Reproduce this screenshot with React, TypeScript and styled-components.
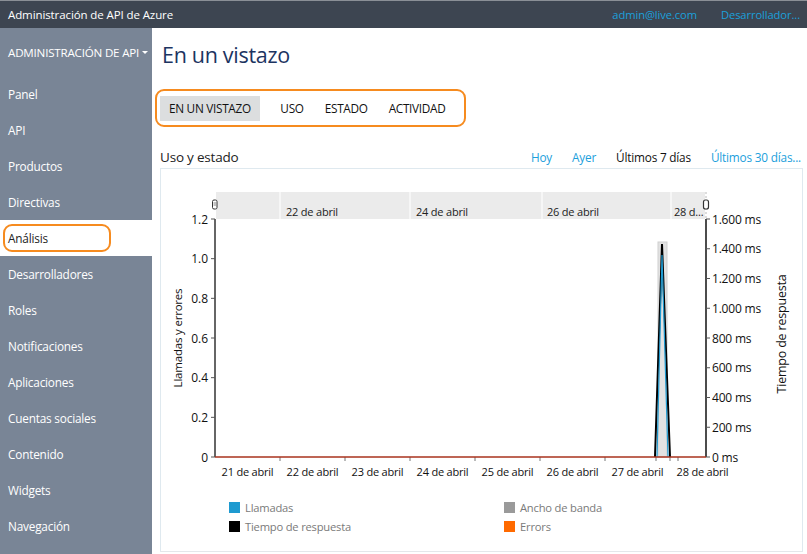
import React from "react";
import styled, { createGlobalStyle } from "styled-components";

const Global = createGlobalStyle`
  html, body { margin: 0; padding: 0; background: #fff; }
  body { font-family: "Open Sans", "Noto Sans", sans-serif; }
  * { box-sizing: border-box; }
`;

const Page = styled.div`
  width: 807px;
  height: 554px;
  display: flex;
  flex-direction: column;
  overflow: hidden;
`;

const TopBar = styled.header`
  height: 28px;
  flex: none;
  background: #3d4551;
  border-top: 1px solid #8a8f96;
  display: flex;
  align-items: center;
  padding: 0 7px 0 8px;
  font-size: 11.5px;
  color: #fff;
  letter-spacing: -0.1px;
`;

const Brand = styled.div`
  flex: 1;
`;

const TopLink = styled.a`
  color: #1ba0dc;
  text-decoration: none;
  margin-left: 24px;
  font-size: 11.2px;
`;

const Body = styled.div`
  flex: 1;
  display: flex;
  min-height: 0;
`;

const Sidebar = styled.nav`
  width: 152px;
  flex: none;
  background: #798596;
  display: flex;
  flex-direction: column;
`;

const SideHeader = styled.div`
  height: 48px;
  display: flex;
  align-items: center;
  padding-left: 8px;
  color: #fff;
  font-size: 11.6px;
  white-space: nowrap;
  letter-spacing: -0.2px;
`;

const Caret = styled.span`
  display: inline-block;
  width: 0;
  height: 0;
  border-left: 3px solid transparent;
  border-right: 3px solid transparent;
  border-top: 3px solid #fff;
  margin-left: 3px;
`;

const SideItem = styled.div<{ $active?: boolean }>`
  height: 36px;
  display: flex;
  align-items: center;
  padding-left: 8px;
  font-size: 11.8px;
  color: ${(p) => (p.$active ? "#222" : "#fff")};
  background: ${(p) => (p.$active ? "#fff" : "transparent")};
  position: relative;
  letter-spacing: -0.2px;
`;

const Highlight = styled.span`
  position: absolute;
  left: 3px;
  top: 4px;
  width: 108px;
  height: 28px;
  border: 2.5px solid #f68b1f;
  border-radius: 9px;
`;

const Main = styled.main`
  flex: 1;
  padding: 0 4px 0 8px;
  display: flex;
  flex-direction: column;
`;

const Title = styled.h1`
  margin: 12px 0 0 2px;
  font-size: 21.5px;
  font-weight: 400;
  color: #1c3461;
  line-height: 30px;
  letter-spacing: -0.3px;
`;

const TabBox = styled.div`
  margin-top: 19px;
  margin-left: -5px;
  width: 311px;
  height: 38px;
  border: 2.5px solid #f68b1f;
  border-radius: 9px;
  display: flex;
  align-items: center;
  padding-left: 3px;
`;

const Tab = styled.div<{ $active?: boolean }>`
  height: 25px;
  display: flex;
  align-items: center;
  padding: 0 ${(p) => (p.$active ? "9px" : "10.5px")};
  margin-right: ${(p) => (p.$active ? "10px" : "0")};
  background: ${(p) => (p.$active ? "#dcdedf" : "transparent")};
  font-size: 11.8px;
  color: #111;
  letter-spacing: -0.3px;
`;

const SectionRow = styled.div`
  margin-top: 19px;
  height: 22px;
  display: flex;
  align-items: center;
`;

const SectionTitle = styled.div`
  flex: 1;
  font-size: 13.5px;
  color: #222;
  letter-spacing: -0.2px;
`;

const RangeLink = styled.span<{ $current?: boolean }>`
  font-size: 11.8px;
  color: ${(p) => (p.$current ? "#111" : "#1ba0dc")};
  margin-left: 20px;
  letter-spacing: -0.2px;
  &:last-child {
    margin-right: 2px;
  }
`;

const Panel = styled.section`
  height: 384px;
  border: 1px solid #dfe9ef;
  border-bottom-color: #e4e7ea;
  display: flex;
  flex-direction: column;
`;

const ChartSvg = styled.svg`
  display: block;
  flex: none;
`;

const Legend = styled.div`
  display: grid;
  grid-template-columns: 275px auto;
  row-gap: 3px;
  padding-left: 68px;
  margin-top: 18px;
`;

const LegendItem = styled.div`
  display: flex;
  align-items: center;
  font-size: 11.2px;
  color: #7a7a7a;
  height: 16px;
  letter-spacing: -0.2px;
`;

const Swatch = styled.span<{ $color: string }>`
  width: 11px;
  height: 11px;
  background: ${(p) => p.$color};
  margin-right: 5px;
`;

const navItems = [
  "Panel",
  "API",
  "Productos",
  "Directivas",
  "Análisis",
  "Desarrolladores",
  "Roles",
  "Notificaciones",
  "Aplicaciones",
  "Cuentas sociales",
  "Contenido",
  "Widgets",
  "Navegación",
];

const FONT = "Open Sans, Noto Sans, sans-serif";

function Chart() {
  const left = 54;
  const right = 545;
  const top = 50;
  const bottom = 288;
  const leftVals = ["1.2", "1.0", "0.8", "0.6", "0.4", "0.2", "0"];
  const rightVals = ["1.600 ms", "1.400 ms", "1.200 ms", "1.000 ms", "800 ms", "600 ms", "400 ms", "200 ms", "0 ms"];
  const days = ["21 de abril", "22 de abril", "23 de abril", "24 de abril", "25 de abril", "26 de abril", "27 de abril", "28 de abril"];
  const h = bottom - top;
  return (
    <ChartSvg width={641} height={312} viewBox="0 0 641 312">
      {/* navigator */}
      <rect x={55} y={23} width={489} height={27} fill="#ebebeb" />
      {[119, 249, 381, 510].map((x) => (
        <line key={x} x1={x} y1={23} x2={x} y2={50} stroke="#fafafa" strokeWidth={1.5} />
      ))}
      {[
        [125, "22 de abril"],
        [255, "24 de abril"],
        [386, "26 de abril"],
        [513, "28 d..."],
      ].map(([x, t]) => (
        <text key={String(t)} x={Number(x)} y={47} fontSize={11} fontFamily={FONT} fill="#222" letterSpacing="-0.2">
          {t}
        </text>
      ))}
      <rect x={51.5} y={31} width={4.5} height={9} rx={1.5} fill="#fff" stroke="#333" strokeWidth={1} />
      <line x1={52.5} y1={34} x2={55} y2={34} stroke="#333" strokeWidth={0.6} />
      <line x1={52.5} y1={36} x2={55} y2={36} stroke="#333" strokeWidth={0.6} />
      <line x1={545} y1={23} x2={545} y2={50} stroke="#bbb" strokeWidth={1} strokeDasharray="2 2" />
      <rect x={542.5} y={31} width={5} height={9} rx={2} fill="#fff" stroke="#333" strokeWidth={1.2} />

      {/* axes */}
      <line x1={left} y1={top} x2={left} y2={bottom} stroke="#333" strokeWidth={1.5} />
      <line x1={right} y1={top} x2={right} y2={bottom} stroke="#111" strokeWidth={1.5} />
      {leftVals.map((v, i) => {
        const y = top + (h * i) / (leftVals.length - 1);
        return (
          <g key={v}>
            <line x1={left - 4} y1={y} x2={left} y2={y} stroke="#555" strokeWidth={1} />
            <text x={left - 7} y={y + 4.5} textAnchor="end" fontSize={12} fontFamily={FONT} fill="#111">
              {v}
            </text>
          </g>
        );
      })}
      {rightVals.map((v, i) => {
        const y = top + (h * i) / (rightVals.length - 1);
        return (
          <g key={v}>
            <line x1={right} y1={y} x2={right + 4} y2={y} stroke="#555" strokeWidth={1} />
            <text x={right + 6} y={y + 4.5} fontSize={12} fontFamily={FONT} fill="#111" letterSpacing="-0.2">
              {v}
            </text>
          </g>
        );
      })}
      {days.map((d, i) => {
        const x = left + 65 * i;
        return (
          <g key={d}>
            {i > 0 && <line x1={x} y1={bottom} x2={x} y2={bottom + 4} stroke="#777" strokeWidth={1} />}
            <text x={x + 32.5} y={307} textAnchor="middle" fontSize={11} fontFamily={FONT} fill="#111" letterSpacing="-0.2">
              {d}
            </text>
          </g>
        );
      })}
      <line x1={495} y1={bottom} x2={495} y2={bottom + 4} stroke="#777" strokeWidth={1} />
      <line x1={517} y1={bottom} x2={517} y2={bottom + 4} stroke="#777" strokeWidth={1} />

      {/* data */}
      <rect x={497} y={73} width={9} height={215} fill="#e2e2e2" stroke="#cfcfcf" strokeWidth={1} />
      <polyline points={`494,${bottom} 501,75 509,${bottom}`} fill="none" stroke="#000" strokeWidth={2} />
      <polyline points={`496,${bottom} 501,86 507,${bottom}`} fill="none" stroke="#1e9ad0" strokeWidth={1.2} />
      <line x1={left} y1={bottom} x2={right} y2={bottom} stroke="#a8321c" strokeWidth={1.6} />

      {/* axis titles */}
      <text
        transform="translate(21 169) rotate(-90)"
        textAnchor="middle"
        fontSize={11.5}
        fontFamily={FONT}
        fill="#111"
        letterSpacing="-0.2"
      >
        Llamadas y errores
      </text>
      <text
        transform="translate(625 165) rotate(-90)"
        textAnchor="middle"
        fontSize={12.5}
        fontFamily={FONT}
        fill="#111"
        letterSpacing="-0.2"
      >
        Tiempo de respuesta
      </text>
    </ChartSvg>
  );
}

export default function App() {
  return (
    <Page>
      <Global />
      <TopBar>
        <Brand>Administración de API de Azure</Brand>
        <TopLink>admin@live.com</TopLink>
        <TopLink>Desarrollador...</TopLink>
      </TopBar>
      <Body>
        <Sidebar>
          <SideHeader>
            ADMINISTRACIÓN DE API
            <Caret />
          </SideHeader>
          {navItems.map((n) => (
            <SideItem key={n} $active={n === "Análisis"}>
              {n}
              {n === "Análisis" && <Highlight />}
            </SideItem>
          ))}
        </Sidebar>
        <Main>
          <Title>En un vistazo</Title>
          <TabBox>
            <Tab $active>EN UN VISTAZO</Tab>
            <Tab>USO</Tab>
            <Tab>ESTADO</Tab>
            <Tab>ACTIVIDAD</Tab>
          </TabBox>
          <SectionRow>
            <SectionTitle>Uso y estado</SectionTitle>
            <RangeLink>Hoy</RangeLink>
            <RangeLink>Ayer</RangeLink>
            <RangeLink $current>Últimos 7 días</RangeLink>
            <RangeLink>Últimos 30 días...</RangeLink>
          </SectionRow>
          <Panel>
            <Chart />
            <Legend>
              <LegendItem>
                <Swatch $color="#1e9ad0" />
                Llamadas
              </LegendItem>
              <LegendItem>
                <Swatch $color="#9a9a9a" />
                Ancho de banda
              </LegendItem>
              <LegendItem>
                <Swatch $color="#000" />
                Tiempo de respuesta
              </LegendItem>
              <LegendItem>
                <Swatch $color="#ff6a00" />
                Errors
              </LegendItem>
            </Legend>
          </Panel>
        </Main>
      </Body>
    </Page>
  );
}
